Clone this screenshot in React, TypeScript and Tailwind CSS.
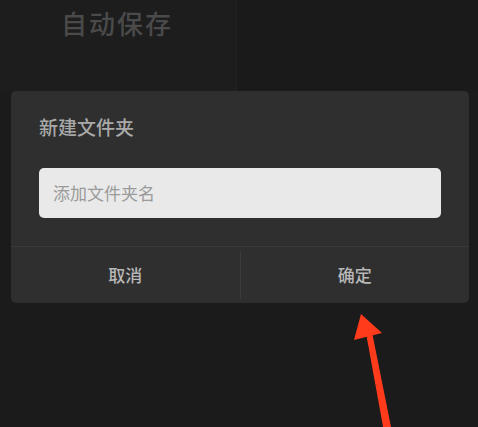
import React from "react";

export default function App() {
  const font = "font-['Noto_Sans_CJK_SC','Noto_Sans',sans-serif]";
  return (
    <div className={`relative w-[478px] h-[427px] overflow-hidden bg-[#1b1b1b] ${font}`}>
      <div className="flex h-[91px]">
        <div className="w-[237px] border-r border-[#222222] bg-[#1d1d1d] pl-[61px] pt-[5px]">
          <span className="text-[26px] font-medium leading-[36px] tracking-[2px] text-[#4a4a4a]">自动保存</span>
        </div>
        <div className="flex-1 bg-[#1a1a1a]" />
      </div>
      <div className="ml-[11px] w-[458px] rounded-[5px] bg-[#2f2f2f]">
        <div className="pl-[28px] pt-[26px] text-[19px] font-medium leading-[20px] text-[#a9a9a9]">新建文件夹</div>
        <div className="mx-[28px] mt-[31px] flex h-[50px] items-center rounded-[5px] bg-[#e9e9e9] pl-[14px] text-[17px] text-[#9a9a9a]">
          添加文件夹名
        </div>
        <div className="mt-[28px] flex h-[57px] border-t border-[#3a3a3a]">
          <div className="flex flex-1 items-center justify-center text-[17px] font-medium text-[#b8b8b8]">取消</div>
          <div className="my-[4px] w-px bg-[#3c3c3c]" />
          <div className="flex flex-1 items-center justify-center text-[17px] font-medium text-[#b8b8b8]">确定</div>
        </div>
      </div>
      <svg className="absolute left-0 top-0" width="478" height="427" viewBox="0 0 478 427">
        <polygon points="366,333 372,332 392,432 384,432" fill="#ff3b1c" />
        <polygon points="361,314 382,333 354,340" fill="#ff3b1c" />
      </svg>
    </div>
  );
}
